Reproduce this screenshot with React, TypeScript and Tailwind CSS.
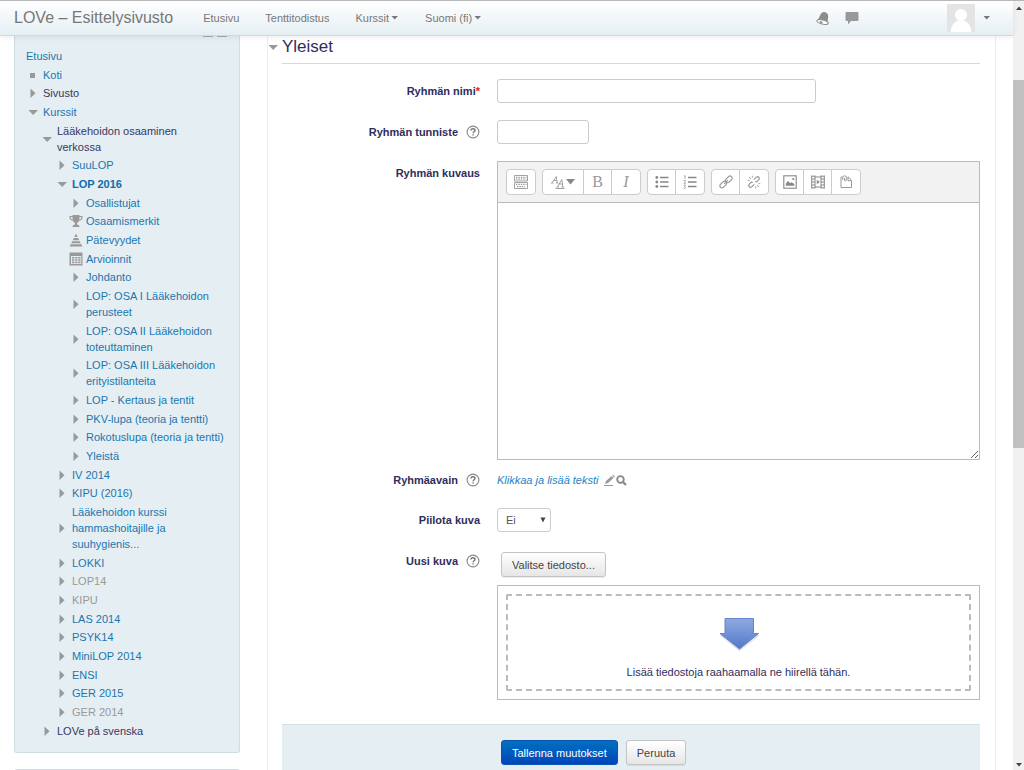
import type { ReactNode } from 'react';

type Marker = 'none' | 'square' | 'right' | 'down' | 'trophy' | 'pyramid' | 'table';

interface TreeItem {
  label: string;
  level: 0 | 1 | 2 | 3;
  marker: Marker;
  tone?: 'plain' | 'dimmed' | 'current';
}

const tree: TreeItem[] = [
  { label: 'Etusivu', level: 0, marker: 'none' },
  { label: 'Koti', level: 0, marker: 'square' },
  { label: 'Sivusto', level: 0, marker: 'right', tone: 'plain' },
  { label: 'Kurssit', level: 0, marker: 'down' },
  { label: 'Lääkehoidon osaaminen\nverkossa', level: 1, marker: 'down', tone: 'plain' },
  { label: 'SuuLOP', level: 2, marker: 'right' },
  { label: 'LOP 2016', level: 2, marker: 'down', tone: 'current' },
  { label: 'Osallistujat', level: 3, marker: 'right' },
  { label: 'Osaamismerkit', level: 3, marker: 'trophy' },
  { label: 'Pätevyydet', level: 3, marker: 'pyramid' },
  { label: 'Arvioinnit', level: 3, marker: 'table' },
  { label: 'Johdanto', level: 3, marker: 'right' },
  { label: 'LOP: OSA I Lääkehoidon\nperusteet', level: 3, marker: 'right' },
  { label: 'LOP: OSA II Lääkehoidon\ntoteuttaminen', level: 3, marker: 'right' },
  { label: 'LOP: OSA III Lääkehoidon\nerityistilanteita', level: 3, marker: 'right' },
  { label: 'LOP - Kertaus ja tentit', level: 3, marker: 'right' },
  { label: 'PKV-lupa (teoria ja tentti)', level: 3, marker: 'right' },
  { label: 'Rokotuslupa (teoria ja tentti)', level: 3, marker: 'right' },
  { label: 'Yleistä', level: 3, marker: 'right' },
  { label: 'IV 2014', level: 2, marker: 'right' },
  { label: 'KIPU (2016)', level: 2, marker: 'right' },
  { label: 'Lääkehoidon kurssi\nhammashoitajille ja\nsuuhygienis...', level: 2, marker: 'right' },
  { label: 'LOKKI', level: 2, marker: 'right' },
  { label: 'LOP14', level: 2, marker: 'right', tone: 'dimmed' },
  { label: 'KIPU', level: 2, marker: 'right', tone: 'dimmed' },
  { label: 'LAS 2014', level: 2, marker: 'right' },
  { label: 'PSYK14', level: 2, marker: 'right' },
  { label: 'MiniLOP 2014', level: 2, marker: 'right' },
  { label: 'ENSI', level: 2, marker: 'right' },
  { label: 'GER 2015', level: 2, marker: 'right' },
  { label: 'GER 2014', level: 2, marker: 'right', tone: 'dimmed' },
  { label: 'LOVe på svenska', level: 1, marker: 'right', tone: 'plain' },
];

const indent = ['pl-0', 'pl-[14px]', 'pl-[29px]', 'pl-[43px]'];

const tones = {
  link: 'text-[#1b76b0]',
  plain: 'text-[#39375f]',
  dimmed: 'text-[#999999]',
  current: 'font-bold text-[#0f6cad]',
};

function MarkerIcon({ type }: { type: Marker }) {
  return (
    <svg viewBox="0 0 14 14" className="h-[14px] w-[14px] shrink-0 fill-[#999]" aria-hidden="true">
      {type === 'square' && <rect x="4" y="5" width="5" height="5" />}
      {type === 'right' && <path d="M4.5 2.5L9.5 7.2L4.5 12Z" />}
      {type === 'down' && <path d="M2.5 5H12L7.2 10Z" />}
      {type === 'trophy' && (
        <path d="M3.5 1H10.5V2H13.5V3.5C13.5 5.6 12 6.6 10 6.8C9.6 8 8.6 8.7 8 9V10.5C9.6 10.8 10.5 11.6 10.5 13H3.5C3.5 11.6 4.4 10.8 6 10.5V9C5.4 8.7 4.4 8 4 6.8C2 6.6 .5 5.6 .5 3.5V2H3.5ZM1.5 3C1.5 4.7 2.5 5.4 3.7 5.7L3.5 3ZM12.5 3H10.5L10.3 5.7C11.5 5.4 12.5 4.7 12.5 3Z" fillRule="evenodd" />
      )}
      {type === 'pyramid' && (
        <path d="M7 .5L8.6 4H5.4ZM4.9 5H9.1L10.2 7.3H3.8ZM3.2 8.2H10.8L11.7 10.3H2.3ZM1.7 11.2H12.3L13.5 13.6H.5Z" />
      )}
      {type === 'table' && (
        <path d="M.5 .5H13.5V13.5H.5ZM2 4V12H12.3V4ZM3 5H5.4V6.5H3ZM6.2 5H8.4V6.5H6.2ZM9.2 5H11.5V6.5H9.2ZM3 7.3H5.4V8.8H3ZM6.2 7.3H8.4V8.8H6.2ZM9.2 7.3H11.5V8.8H9.2ZM3 9.6H5.4V11.2H3ZM6.2 9.6H8.4V11.2H6.2ZM9.2 9.6H11.5V11.2H9.2Z" fillRule="evenodd" />
      )}
    </svg>
  );
}

function Caret() {
  return (
    <svg viewBox="0 0 8 4" className="h-1 w-2 fill-[#777]" aria-hidden="true">
      <path d="M0.5 0H7L3.75 3.6Z" />
    </svg>
  );
}

function Header() {
  return (
    <header className="relative z-10 flex h-9 shrink-0 items-center border-t border-b border-t-[#b8b8bb] border-b-[#ccdbe1] bg-linear-to-b from-white to-[#e5eff3] pr-[22px] pl-[14px] text-[#777] shadow-[0_1px_6px_rgba(0,0,0,0.08)]">
      <a href="#" className="mr-[30px] text-base leading-5">LOVe – Esittelysivusto</a>
      <nav className="flex items-center gap-[26px]">
        <a href="#">Etusivu</a>
        <a href="#">Tenttitodistus</a>
        <button type="button" className="flex items-center gap-[2px]">Kurssit <Caret /></button>
        <button type="button" className="flex items-center gap-[2px]">Suomi (fi) <Caret /></button>
      </nav>
      <div className="ml-auto flex items-center">
        <button type="button" aria-label="Ilmoitukset" className="mr-[15px]">
          <svg viewBox="0 0 14 14" className="h-[14px] w-[14px]" aria-hidden="true">
            <path d="M1 9.3C3.4 7.8 3.4 4.7 5 2.7C6.3 1 8.4 .5 10 1.5C12.4 2.8 12.5 5.2 12 7.2C11.6 9.3 11.5 10.8 12.4 12.2Z" fill="#8d8d8d" />
            <ellipse cx="6.5" cy="11" rx="5.8" ry="2" transform="rotate(14 6.5 11)" fill="#fff" stroke="#8d8d8d" strokeWidth="1.1" />
            <path d="M3.5 10L6.7 10.8L6 12.4C4.5 12.4 3.4 11.3 3.5 10Z" fill="#8d8d8d" />
          </svg>
        </button>
        <button type="button" aria-label="Viestit" className="mr-[88px]">
          <svg viewBox="0 0 14 14" className="h-[14px] w-[14px] fill-[#999]" aria-hidden="true">
            <path d="M1.5 1H12.5Q13.5 1 13.5 2V9Q13.5 10 12.5 10H6L3 13.4V10H1.5Q.5 10 .5 9V2Q.5 1 1.5 1Z" />
          </svg>
        </button>
        <button type="button" aria-label="Käyttäjävalikko" className="flex items-center gap-2">
          <svg viewBox="0 0 28 28" className="h-7 w-7" aria-hidden="true">
            <rect width="28" height="28" fill="#e4e4e4" />
            <circle cx="14" cy="11" r="6" fill="#fff" />
            <path d="M3.5 28C4 21 8 16 14 16C20 16 24 21 24.5 28Z" fill="#fff" />
          </svg>
          <Caret />
        </button>
      </div>
    </header>
  );
}

function Sidebar() {
  return (
    <aside className="w-[226px] shrink-0">
      <div className="rounded-b-[3px] border border-t-0 border-[#cfdde2] bg-[#e5eef2] pr-2 pb-3 pl-[11px]">
        <div className="flex h-[10px] justify-end gap-1 pr-1">
          <span className="h-px w-[10px] bg-[#aaa]" />
          <span className="h-px w-[10px] bg-[#aaa]" />
        </div>
        <ul>
          {tree.map((item) => (
            <li
              key={item.label}
              className={`flex items-center gap-[3px] pt-[2px] pb-px nth-[3n]:pt-px ${indent[item.level]}`}
            >
              {item.marker !== 'none' && <MarkerIcon type={item.marker} />}
              {item.tone === 'plain' ? (
                <span className={`whitespace-pre-line ${tones.plain}`}>{item.label}</span>
              ) : (
                <a href="#" className={`whitespace-pre-line ${tones[item.tone ?? 'link']}`}>{item.label}</a>
              )}
            </li>
          ))}
        </ul>
      </div>
      <div className="mt-4 h-10 rounded-t-[3px] border border-[#cfdde2] bg-[#e5eef2]" />
    </aside>
  );
}

function HelpButton() {
  return (
    <button type="button" aria-label="Ohje" className="flex">
      <svg viewBox="0 0 14 14" className="h-[14px] w-[14px]" fill="none" aria-hidden="true">
        <circle cx="7" cy="7" r="5.9" stroke="#888" strokeWidth="1.1" />
        <path d="M5 5.6C5 4.4 5.8 3.7 7 3.7C8.2 3.7 9 4.4 9 5.4C9 6.7 7.1 6.8 7.1 8.3M7.1 9.3V10.6" stroke="#777" strokeWidth="1.4" />
      </svg>
    </button>
  );
}

interface FieldProps {
  label: string;
  id: string;
  help?: boolean;
  required?: boolean;
  className?: string;
  children: ReactNode;
}

function Field({ label, id, help, required, className = 'mb-[17px]', children }: FieldProps) {
  return (
    <div className={`flex gap-[17px] ${className}`}>
      <div className="flex w-[198px] shrink-0 items-center justify-end gap-2 self-start pt-1">
        <label htmlFor={id} className="font-bold">
          {label}
          {required && <span className="text-[#e02020]">*</span>}
        </label>
        {help && <HelpButton />}
      </div>
      <div className="min-w-0 flex-1">{children}</div>
    </div>
  );
}

interface Tool {
  name: string;
  icon: ReactNode;
  wide?: boolean;
}

const toolGroups: Tool[][] = [
  [
    {
      name: 'Näytä lisää painikkeita',
      icon: (
        <svg viewBox="0 0 14 14" className="h-[14px] w-[14px]" fill="none" stroke="#999">
          <path d="M.5 .5H13.5V6H.5ZM.5 7.5H13.5V13.5H.5Z" strokeWidth=".9" />
          <path d="M2 2.3H12.5M2 4.2H12.5M2 9.3H12.5M3 11.6H11" strokeWidth="1.2" strokeDasharray="1.4 1" />
        </svg>
      ),
    },
  ],
  [
    {
      name: 'Kappaletyylit',
      wide: true,
      icon: (
        <svg viewBox="0 0 26 14" className="h-[14px] w-[26px]" fill="none" stroke="#999" strokeWidth=".9">
          <path d="M2 8L6.3 1.5L7.3 8M3.8 5.5H7M1 8H3.3M6 8H8.5M7.5 12L11.8 4.5L12.8 12M9.2 9H12.5M6.5 12H9M11.5 12H14M5.5 13.5H14.5" />
          <path d="M16 4H25L20.500 9.500Z" fill="#888" stroke="none" />
        </svg>
      ),
    },
    { name: 'Lihavoitu', icon: <span className="font-['Liberation_Serif',serif] text-base leading-4 text-[#999]">B</span> },
    { name: 'Kursivoitu', icon: <span className="font-['Liberation_Serif',serif] text-base leading-4 text-[#999] italic">I</span> },
  ],
  [
    {
      name: 'Järjestämätön lista',
      icon: (
        <svg viewBox="0 0 14 14" className="h-[14px] w-[14px]" stroke="#888" fill="#888">
          <path d="M5 2.5H13.5M5 7H13.5M5 11.5H13.5" strokeWidth="1.3" />
          <circle cx="1.800" cy="2.500" r="1.400" stroke="none" />
          <circle cx="1.800" cy="7" r="1.400" stroke="none" />
          <circle cx="1.800" cy="11.500" r="1.400" stroke="none" />
        </svg>
      ),
    },
    {
      name: 'Järjestetty lista',
      icon: (
        <svg viewBox="0 0 14 14" className="h-[14px] w-[14px]" stroke="#888" fill="none">
          <path d="M5 2.5H13.5M5 7H13.5M5 11.5H13.5" strokeWidth="1.3" />
          <path d="M1 1.2L2 .6V4M.7 5.5H2.3V6.8L1 8.3H2.7M.7 10H2.5L1.5 11.4L2.5 12L2 13.4H.7" strokeWidth=".7" />
        </svg>
      ),
    },
  ],
  [
    {
      name: 'Linkki',
      icon: (
        <svg viewBox="0 0 14 14" className="h-[14px] w-[14px]" fill="none" stroke="#999" strokeWidth="1.2">
          <rect x="6" y="2.3" width="7.6" height="4.2" rx="2" transform="rotate(-45 9.8 4.4)" />
          <rect x=".4" y="7.5" width="7.6" height="4.2" rx="2" transform="rotate(-45 4.2 9.6)" />
          <path d="M5.2 8.8L8.8 5.2" />
        </svg>
      ),
    },
    {
      name: 'Poista linkki',
      icon: (
        <svg viewBox="0 0 14 14" className="h-[14px] w-[14px]" fill="none" stroke="#999" strokeWidth="1.2">
          <path d="M6.8 4.7L9.4 2.1C11 .7 13.3 3 11.9 4.6L9.7 6.8L8.2 6.5M7.2 9.3L4.6 11.9C3 13.3 .7 11 2.1 9.4L4.3 7.2L5.8 7.5" />
          <path d="M2 2L4 4M5.3 .7V2.7M.7 5.3H2.7M12 12L10 10M8.7 13.3V11.3M13.3 8.7H11.3" strokeWidth=".9" />
        </svg>
      ),
    },
  ],
  [
    {
      name: 'Kuva',
      icon: (
        <svg viewBox="0 0 14 14" className="h-[14px] w-[14px]" fill="#888">
          <rect x=".8" y=".8" width="12.4" height="12.4" fill="none" stroke="#888" strokeWidth="1.1" />
          <path d="M2.8 10.8V8.8L5 5.8L7 8.2L8.3 7.2L11.3 9V10.8Z" />
          <circle cx="10.3" cy="4" r="1.1" />
        </svg>
      ),
    },
    {
      name: 'Media',
      icon: (
        <svg viewBox="0 0 14 14" className="h-[14px] w-[14px]" fill="none" stroke="#888">
          <path d="M.7 .5V13.5M13.3 .5V13.5M4 .5V13.5M10 .5V13.5M.7 1.2H4M10 1.2H13.3M.7 12.8H4M10 12.8H13.3M4 2H10M4 12H10" strokeWidth="1" />
          <path d="M1 4H4M1 7H4M1 10H4M10 4H13M10 7H13M10 10H13" strokeWidth="1.2" />
          <path d="M5.8 4.8L8.8 7L5.8 9.2Z" fill="#888" stroke="none" />
        </svg>
      ),
    },
    {
      name: 'Hallitse tiedostoja',
      icon: (
        <svg viewBox="0 0 14 14" className="h-[14px] w-[14px]" fill="none" stroke="#999" strokeWidth="1">
          <path d="M3.5 2H2V12.5H12.5V5.5L9.5 2H8.5M9 2.2V5.7H12.4" />
          <path d="M3.8 5V2C3.8 .5 7.3 .5 7.3 2V5.2C7.3 6.2 5.5 6.2 5.5 5.2V3" />
        </svg>
      ),
    },
  ],
];

function Editor() {
  return (
    <div className="border border-[#bbb]">
      <div className="flex flex-wrap gap-[6px] border-b border-[#bbb] bg-[#f2f2f2] px-2 py-[7px]">
        {toolGroups.map((group) => (
          <div key={group[0].name} className="flex divide-x divide-[#ccc] rounded-[4px] border border-[#ccc] bg-white">
            {group.map((tool) => (
              <button
                key={tool.name}
                type="button"
                aria-label={tool.name}
                className={`flex h-6 items-center justify-center ${tool.wide ? 'w-[41px]' : 'w-7'}`}
              >
                {tool.icon}
              </button>
            ))}
          </div>
        ))}
      </div>
      <textarea id="kuvaus" className="block h-64 w-full resize bg-white p-1 outline-none" />
    </div>
  );
}

function DropZone() {
  return (
    <div className="mt-2 border border-[#bbb] p-2">
      <div className="flex flex-col items-center rounded-[2px] border-2 border-dashed border-[#bbb] pt-5 pb-[9px]">
        <svg viewBox="0 0 44 38" className="mb-[10px] h-[38px] w-11" aria-hidden="true">
          <defs>
            <linearGradient id="arrow" x1="0" y1="0" x2="0" y2="1">
              <stop offset="0" stopColor="#8fa9e0" />
              <stop offset="1" stopColor="#5478cc" />
            </linearGradient>
          </defs>
          <path d="M8 4H37V19H43L22.5 35.5L2 19H8Z" fill="#000" opacity=".1" />
          <path d="M8 2.5H36.5V17.5H41.5L22.5 33L3 17.5H8Z" fill="url(#arrow)" stroke="#6484cd" />
        </svg>
        <p>Lisää tiedostoja raahaamalla ne hiirellä tähän.</p>
      </div>
    </div>
  );
}

const buttonStyle =
  'h-[25px] rounded-[3px] border border-[#c4c4c4] bg-linear-to-b from-white to-[#e6e6e6] px-[10px] text-[#444] shadow-[0_1px_1px_rgba(0,0,0,0.08)]';
const inputStyle = 'block h-6 rounded-[3px] border border-[#ccc] bg-white px-2';

function GroupForm() {
  return (
    <form className="min-h-full text-[#2f2d5c]" onSubmit={(e) => e.preventDefault()}>
      <div className="-ml-4 flex items-center gap-[2px]">
        <MarkerIcon type="down" />
        <h2 className="text-[17px] leading-[22px]">Yleiset</h2>
      </div>
      <div className="mt-[5px] mb-[15px] border-t border-[#cddce1]" />
      <Field id="nimi" label="Ryhmän nimi" required>
        <input id="nimi" type="text" className={`${inputStyle} w-[319px] max-w-full`} />
      </Field>
      <Field id="tunniste" label="Ryhmän tunniste" help>
        <input id="tunniste" type="text" className={`${inputStyle} w-[92px]`} />
      </Field>
      <Field id="kuvaus" label="Ryhmän kuvaus" className="mb-2">
        <Editor />
      </Field>
      <Field id="avain" label="Ryhmäavain" help className="mb-5">
        <div className="flex items-center pt-1">
          <button id="avain" type="button" className="text-[#1c83c4] italic">Klikkaa ja lisää teksti</button>
          <svg viewBox="0 0 26 14" className="ml-1 h-[14px] w-[26px]" aria-hidden="true">
            <path d="M2 11L3 8L8.5 3L10.5 5L5 10ZM9.2 2.5L10 1.8L12 3.6L11.2 4.4ZM1 12H10V13H1Z" fill="#999" />
            <circle cx="17.5" cy="6.5" r="3.3" fill="none" stroke="#888" strokeWidth="1.8" />
            <path d="M20 9L23 12" stroke="#888" strokeWidth="2.2" />
          </svg>
        </div>
      </Field>
      <Field id="piilota" label="Piilota kuva">
        <div className="relative w-[54px]">
          <select id="piilota" className={`${inputStyle} w-full appearance-none text-[#555]`}>
            <option>Ei</option>
            <option>Kyllä</option>
          </select>
          <svg viewBox="0 0 6 6" className="pointer-events-none absolute top-[9px] right-[5px] h-[6px] w-[6px] fill-[#444]" aria-hidden="true">
            <path d="M.5 .5H5.5L3 5.5Z" />
          </svg>
        </div>
      </Field>
      <Field id="kuva" label="Uusi kuva" help className="mb-6">
        <button id="kuva" type="button" className={`${buttonStyle} mt-[3px] ml-1 block`}>Valitse tiedosto...</button>
        <DropZone />
      </Field>
      <div className="flex gap-2 border-t border-[#d5e0e5] bg-[#e5eef2] pt-[15px] pb-4 pl-[219px]">
        <button type="submit" className="h-[25px] rounded-[3px] border border-[#0a55b0] bg-linear-to-b from-[#0070c0] to-[#0044bb] px-[10px] text-white">
          Tallenna muutokset
        </button>
        <button type="button" className={buttonStyle}>Peruuta</button>
      </div>
    </form>
  );
}

function ScrollTrack() {
  return (
    <div className="flex w-[11px] shrink-0 flex-col items-center border-t border-[#b8b8bb] bg-[#f1f1f1]" aria-hidden="true">
      <svg viewBox="0 0 8 4" className="mt-[5px] h-1 w-2 fill-[#444]"><path d="M1 4H7L4 .5Z" /></svg>
      <div className="min-h-0 flex-[70]" />
      <div className="min-h-0 w-full flex-[367] bg-[#c1c1c1]" />
      <div className="min-h-0 flex-[315]" />
      <svg viewBox="0 0 8 4" className="mb-[3px] h-1 w-2 fill-[#444]"><path d="M1 0H7L4 3.5Z" /></svg>
    </div>
  );
}

export default function App() {
  return (
    <div className="flex h-screen overflow-hidden bg-white font-['Liberation_Sans',Arial,sans-serif] text-[11px] leading-4">
      <div className="flex min-w-0 flex-1 flex-col">
        <Header />
        <div className="flex min-h-0 flex-1 overflow-hidden pr-[17px] pl-[14px]">
          <Sidebar />
          <main className="ml-[27px] min-w-0 flex-1 self-stretch border-x border-[#e9eef1] pr-[15px] pl-[14px]">
            <GroupForm />
          </main>
        </div>
      </div>
      <ScrollTrack />
    </div>
  );
}
